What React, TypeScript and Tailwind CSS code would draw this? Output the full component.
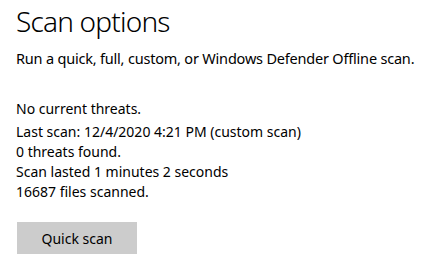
export default function App() {
  return (
    <div
      className="w-[440px] h-[270px] bg-white text-black pl-4"
      style={{ fontFamily: '"Noto Sans", "Open Sans", sans-serif' }}
    >
      <h1 className="pt-px text-[28px] leading-[40px] font-light tracking-[-0.8px]">Scan options</h1>
      <p className="mt-[5px] text-[14.5px] leading-[24px] tracking-[-0.2px] whitespace-nowrap">
        Run a quick, full, custom, or Windows Defender Offline scan.
      </p>
      <div className="mt-[29px] text-[14px] leading-[20px]">
        <p className="mb-[3px]">No current threats.</p>
        <p>Last scan: 12/4/2020 4:21 PM (custom scan)</p>
        <p>0 threats found.</p>
        <p>Scan lasted 1 minutes 2 seconds</p>
        <p>16687 files scanned.</p>
      </div>
      <button className="mt-[20px] ml-px w-[120px] h-8 bg-[#cccccc] text-[14px] text-black flex items-center justify-center">
        Quick scan
      </button>
    </div>
  );
}
